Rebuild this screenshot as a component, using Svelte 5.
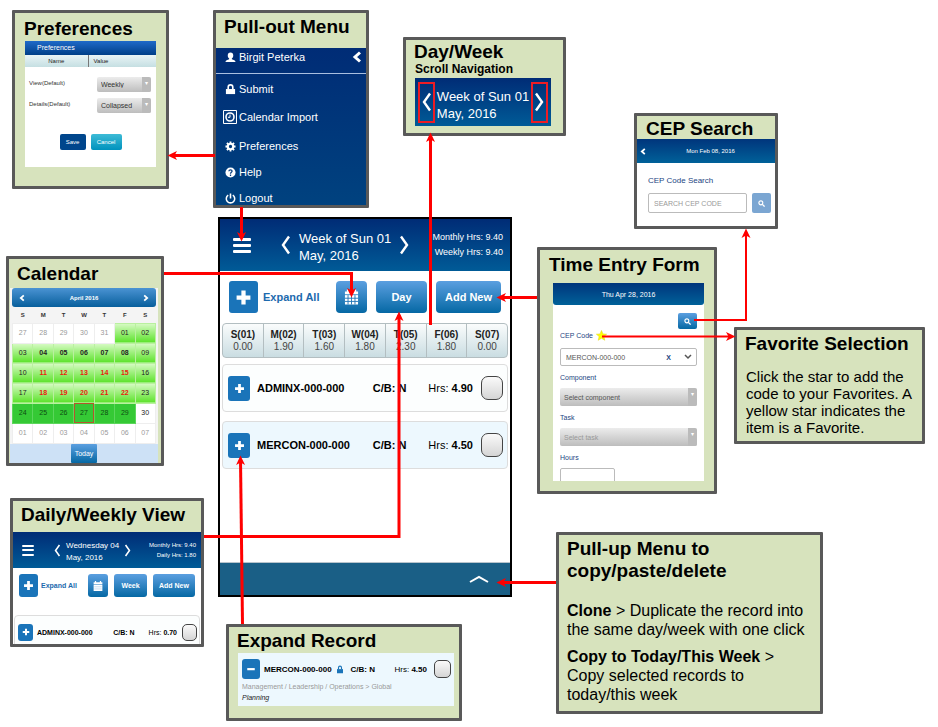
<script>
  const days = [
    ['S(01)', '0.00'], ['M(02)', '1.90'], ['T(03)', '1.60'], ['W(04)', '1.80'],
    ['T(05)', '2.30'], ['F(06)', '1.80'], ['S(07)', '0.00']
  ];
  const weekdays = ['S', 'M', 'T', 'W', 'T', 'F', 'S'];
  const out = (...n) => n.map((d) => ({ d, c: 'out' }));
  const weeks = [
    [...out('27', '28', '29', '30', '31'), { d: '01', c: 'open' }, { d: '02', c: 'open' }],
    ['03', '04', '05', '06', '07', '08', '09'].map((d, i) => ({ d, c: i > 0 && i < 6 ? 'open strong' : 'open' })),
    ['10', '11', '12', '13', '14', '15', '16'].map((d, i) => ({ d, c: i > 0 && i < 6 ? 'open due' : 'open' })),
    ['17', '18', '19', '20', '21', '22', '23'].map((d, i) => ({ d, c: i > 0 && i < 6 ? 'open due' : 'open' })),
    ['24', '25', '26', '27', '28', '29', '30'].map((d) => ({ d, c: d === '30' ? '' : d === '27' ? 'full today' : 'full' })),
    out('01', '02', '03', '04', '05', '06', '07')
  ];
  const arrows = [
    { d: 'M215 155.5H171', w: 3 },
    { d: 'M241.5 207V238', w: 3 },
    { d: 'M430.5 325V136', w: 3 },
    { d: 'M164 273.5H351.5V294', w: 3 },
    { d: 'M537 297.5H500', w: 3 },
    { d: 'M204 536.5H399V315', w: 3 },
    { d: 'M242.5 624L240.5 459', w: 3 },
    { d: 'M556 582.5H500', w: 3 },
    { d: 'M694 320H746V232', w: 2 },
    { d: 'M602 336.5H732', w: 2 }
  ];
</script>

{#snippet chevron(dir)}
  <svg class="chev" viewBox="0 0 10 20" aria-hidden="true">
    <path d={dir === 'left' ? 'M8 1.5L2 10L8 18.5' : 'M2 1.5L8 10L2 18.5'} fill="none" stroke="#fff" stroke-width="2.4" />
  </svg>
{/snippet}

{#snippet bold(dir)}
  <svg class="bold" viewBox="0 0 10 12" aria-hidden="true">
    <path d={dir === 'left' ? 'M8 1.5L3 6L8 10.500' : 'M2 1.5L7 6L2 10.500'} fill="none" stroke="#fff" stroke-width="3" />
  </svg>
{/snippet}

{#snippet plus()}
  <svg class="plus" viewBox="0 0 16 16" aria-hidden="true"><path d="M6 1.500h4V6h4.500v4H10v4.500H6V10H1.500V6H6z" fill="#fff" /></svg>
{/snippet}

{#snippet glass()}
  <svg class="glass" viewBox="0 0 16 16" aria-hidden="true">
    <circle cx="6.500" cy="6.500" r="4.500" fill="none" stroke="#fff" stroke-width="2.600" /><path d="M10 10l5 5" stroke="#fff" stroke-width="3" />
  </svg>
{/snippet}

{#snippet calendarIcon(grid)}
  <svg class="cal-icon" viewBox="0 0 16 18" aria-hidden="true">
    <path d="M1 3h2V1h2v2h6V1h2v2h2v3H1z" fill="#fff" />
    <path d="M1 7h14v10H1z" fill="#fff" />
    {#if grid}<path d="M4.300 7v10M8 7v10M11.700 7v10M1 10.300h14M1 13.700h14" stroke="#2577b8" stroke-width="1" />{:else}<path d="M2 10.300h12M2 13.700h12" stroke="#7fb0dc" stroke-width=".7" />{/if}
  </svg>
{/snippet}

{#snippet bar(line1, line2, hrs1, hrs2)}
  <header class="bar">
    <button class="plain burger" aria-label="Menu"><span></span><span></span><span></span></button>
    <button class="plain" aria-label="Previous">{@render chevron('left')}</button>
    <p class="when">{line1}<br />{line2}</p>
    <button class="plain" aria-label="Next">{@render chevron('right')}</button>
    <p class="hours">{hrs1}<br />{hrs2}</p>
  </header>
{/snippet}

{#snippet tools(mode, grid)}
  <div class="tools">
    <button class="flat" aria-label="Expand">{@render plus()}</button>
    <span class="expand">Expand All</span>
    <button class="blue cal" aria-label="Calendar">{@render calendarIcon(grid)}</button>
    <button class="blue mode">{mode}</button>
    <button class="blue add">Add New</button>
  </div>
{/snippet}

{#snippet record(code, hrs, tint)}
  <div class="record" class:tint>
    <button class="flat" aria-label="Expand {code}">{@render plus()}</button>
    <b class="code">{code}</b>
    <b class="cb">C/B: N</b>
    <span class="hrs">Hrs: <b>{hrs}</b></span>
    <input type="checkbox" aria-label="Select {code}" />
  </div>
{/snippet}

<main>
  <section class="card prefs">
    <h2>Preferences</h2>
    <div class="screen">
      <h3>Preferences</h3>
      <div class="heads"><span>Name</span><span>Value</span></div>
      <div class="field"><label for="view">View(Default)</label><span class="pick"><select id="view"><option>Weekly</option></select></span></div>
      <div class="field"><label for="details">Details(Default)</label><span class="pick"><select id="details"><option>Collapsed</option></select></span></div>
      <div class="actions"><button class="save">Save</button><button class="cancel">Cancel</button></div>
    </div>
  </section>

  <section class="card menu">
    <h2>Pull-out Menu</h2>
    <nav>
      <div class="user">
        <svg viewBox="0 0 12 12" aria-hidden="true"><path d="M6 .5c2 0 3 1.300 3 3.200 0 1.500-.6 2.600-1.500 3.200v1c1.800.5 4 1.200 4 3.100H.5c0-1.900 2.200-2.600 4-3.100v-1C3.600 6.300 3 5.200 3 3.700 3 1.800 4 .5 6 .5z" fill="#fff" /></svg>
        <span>Birgit Peterka</span>
        <button class="plain" aria-label="Close menu">{@render bold('left')}</button>
      </div>
      <div class="group">
        <a href="#submit"><svg viewBox="0 0 12 12" aria-hidden="true"><path d="M1 5.500h10V11H1z" fill="#fff" /><path d="M3.500 6V3.500a2.500 2.500 0 0 1 5 0V6" fill="none" stroke="#fff" stroke-width="1.800" /></svg>Submit</a>
        <a href="#import"><svg class="boxed" viewBox="0 0 14 14" aria-hidden="true"><path d="M.5.5h13v13H.5z" fill="#0a3f80" stroke="#fff" /><circle cx="7" cy="7" r="4" fill="none" stroke="#fff" stroke-width="1.600" /><path d="M7 4.500V7.300H5" fill="none" stroke="#fff" /></svg>Calendar Import</a>
      </div>
      <div class="group late">
        <a href="#preferences"><svg viewBox="0 0 12 12" aria-hidden="true"><circle cx="6" cy="6" r="3" fill="none" stroke="#fff" stroke-width="2.400" /><path d="M6 .5v2M6 9.500v2M.5 6h2M9.500 6h2M2.100 2.100l1.400 1.400M8.500 8.500l1.400 1.400M2.100 9.900l1.400-1.400M8.500 3.500l1.400-1.400" stroke="#fff" stroke-width="2" /></svg>Preferences</a>
        <a href="#help"><svg viewBox="0 0 12 12" aria-hidden="true"><circle cx="6" cy="6" r="5.500" fill="#fff" /><path d="M4.200 4.700C4.300 2.500 7.800 2.600 7.700 4.600 7.600 5.800 6 5.700 6 7.300M6 8.200v1.500" fill="none" stroke="#0a3f80" stroke-width="1.400" /></svg>Help</a>
        <a href="#logout"><svg viewBox="0 0 12 12" aria-hidden="true"><path d="M3.500 2.300a4.600 4.600 0 1 0 5 0M6 .5v5.500" fill="none" stroke="#fff" stroke-width="1.700" /></svg>Logout</a>
      </div>
    </nav>
  </section>

  <section class="card scroll">
    <h2>Day/Week</h2>
    <h4>Scroll Navigation</h4>
    <div class="screen">
      <button class="plain ring" aria-label="Previous week">{@render chevron('left')}</button>
      <p>Week of Sun 01<br />May, 2016</p>
      <button class="plain ring" aria-label="Next week">{@render chevron('right')}</button>
    </div>
  </section>

  <section class="card cep">
    <h2>CEP Search</h2>
    <div class="screen">
      <header><button class="plain" aria-label="Back">{@render bold('left')}</button><span>Mon Feb 08, 2016</span></header>
      <label for="cep">CEP Code Search</label>
      <div class="find"><input id="cep" type="text" placeholder="SEARCH CEP CODE" /><button aria-label="Search">{@render glass()}</button></div>
    </div>
  </section>

  <section class="card calendar">
    <h2>Calendar</h2>
    <div class="screen">
      <header><button class="plain" aria-label="Previous month">{@render bold('left')}</button><b>April 2016</b><button class="plain" aria-label="Next month">{@render bold('right')}</button></header>
      <table>
        <thead><tr>{#each weekdays as d}<th>{d}</th>{/each}</tr></thead>
        <tbody>
          {#each weeks as week}
            <tr>{#each week as day}<td class={day.c}>{day.d}</td>{/each}</tr>
          {/each}
        </tbody>
      </table>
      <footer><button class="blue">Today</button></footer>
    </div>
  </section>

  <section class="phone">
    {@render bar('Week of Sun 01', 'May, 2016', 'Monthly Hrs: 9.40', 'Weekly Hrs: 9.40')}
    {@render tools('Day', true)}
    <div class="week">
      {#each days as [name, total]}<div><b>{name}</b><span>{total}</span></div>{/each}
    </div>
    {@render record('ADMINX-000-000', '4.90', false)}
    {@render record('MERCON-000-000', '4.50', true)}
    <footer>
      <button class="plain" aria-label="Open menu"><svg viewBox="0 0 20 8" aria-hidden="true"><path d="M1 7L10 1.800L19 7" fill="none" stroke="#fff" stroke-width="2" /></svg></button>
    </footer>
  </section>

  <section class="card entry">
    <h2>Time Entry Form</h2>
    <div class="screen">
      <header>Thu Apr 28, 2016</header>
      <form>
        <button type="button" class="blue" aria-label="Search codes">{@render glass()}</button>
        <div class="starred">
          <label for="code">CEP Code</label>
          <svg viewBox="0 0 12 12" aria-hidden="true"><path d="M6 .5l1.600 3.800 4 .3-3 2.600 1 4L6 9l-3.600 2.200 1-4-3-2.600 4-.3z" fill="#ff0" stroke="#e3d820" stroke-width=".6" /></svg>
        </div>
        <div class="combo">
          <input id="code" type="text" value="MERCON-000-000" />
          <button type="button" class="plain">X</button>
          <svg viewBox="0 0 8 6" aria-hidden="true"><path d="M1 1l3 3 3-3" fill="none" stroke="#555" stroke-width="1.500" /></svg>
        </div>
        <label for="component">Component</label>
        <span class="pick"><select id="component"><option>Select component</option></select></span>
        <label for="task">Task</label>
        <span class="pick faded"><select id="task"><option>Select task</option></select></span>
        <label for="hours">Hours</label>
        <input class="amount" id="hours" type="text" />
      </form>
    </div>
  </section>

  <section class="card favorite">
    <h2>Favorite Selection</h2>
    <p>Click the star to add the<br />code to your Favorites. A<br />yellow star indicates the<br />item is a Favorite.</p>
  </section>

  <section class="card daily">
    <h2>Daily/Weekly View</h2>
    <div class="screen">
      {@render bar('Wednesday 04', 'May, 2016', 'Monthly Hrs: 9.40', 'Daily Hrs: 1.80')}
      {@render tools('Week', false)}
      {@render record('ADMINX-000-000', '0.70', false)}
    </div>
  </section>

  <section class="card expanded">
    <h2>Expand Record</h2>
    <div class="screen">
      <div class="line">
        <button class="flat" aria-label="Collapse"><svg viewBox="0 0 16 16" aria-hidden="true"><path d="M2 6.500h12v3.500H2z" fill="#fff" /></svg></button>
        <b class="code">MERCON-000-000</b>
        <svg class="lock" viewBox="0 0 10 12" aria-hidden="true"><path d="M1 5.500h8V11H1z" fill="#1a74b9" /><path d="M3 6V3.500a2 2 0 0 1 4 0V6" fill="none" stroke="#1a74b9" stroke-width="1.500" /></svg>
        <b>C/B: N</b>
        <span class="hrs">Hrs: <b>4.50</b></span>
        <input type="checkbox" aria-label="Select MERCON-000-000" />
      </div>
      <p>Management / Leadership / Operations &gt; Global</p>
      <p><em>Planning</em></p>
    </div>
  </section>

  <section class="card pullup">
    <h2>Pull-up Menu to<br />copy/paste/delete</h2>
    <p><b>Clone</b> &gt; Duplicate the record into the same day/week with one click</p>
    <p><b>Copy to Today/This Week</b> &gt;<br />Copy selected records to<br />today/this week</p>
  </section>

  <svg class="arrows" aria-hidden="true">
    <defs>
      <marker id="head" markerUnits="userSpaceOnUse" markerWidth="10" markerHeight="10" refX="6" refY="5" orient="auto" viewBox="0 0 10 10">
        <path d="M0 .5L9.500 5L0 9.500L2.500 5z" fill="#f00" />
      </marker>
    </defs>
    {#each arrows as a}<path d={a.d} fill="none" stroke="#f00" stroke-width={a.w} marker-end="url(#head)" />{/each}
  </svg>
</main>

<style>
  :global(body) { margin: 0; background: #fff; }
  main { position: relative; min-height: 100vh; font-family: "Liberation Sans", Arial, sans-serif; color: #000; overflow: hidden; }
  main * { box-sizing: border-box; }
  h2, h3, h4, p { margin: 0; }
  button, input, select { font: inherit; color: inherit; padding: 0; margin: 0; border: 0; }
  button { display: flex; align-items: center; justify-content: center; flex: none; }
  svg { display: block; flex: none; }
  .plain { background: none; }
  .arrows { position: absolute; inset: 0; width: 100%; height: 100%; pointer-events: none; }

  .card { position: absolute; display: flex; flex-direction: column; background: #d7e3bd; border: 3px solid #595959; border-radius: 1px; padding-top: 3px; }
  h2 { font-size: 19px; line-height: 22px; padding-left: 8px; white-space: nowrap; }
  .screen { background: #fff; }
  .blue { background: linear-gradient(#5b9fe0, #0568a4); color: #fff; font-weight: bold; border-radius: 4px; }
  .flat { background: #1a74b9; border-radius: 3px; }
  input[type="checkbox"] { appearance: none; flex: none; border: 1px solid #444; background: linear-gradient(#fafafa, #d5d5d5); }

  .pick { display: flex; border-radius: 2px; overflow: hidden; background: linear-gradient(#ececec, #bdbdbd); position: relative; }
  .pick::after { content: "▾"; width: 9px; background: #bbb; color: #fff; font-size: 6px; line-height: 12px; text-align: center; }
  .pick select { appearance: none; flex: 1; min-width: 0; background: none; padding-left: 4px; }

  .prefs { left: 12px; top: 10px; width: 157px; min-height: 179px; padding-top: 5px; }
  .prefs h2 { padding-left: 9px; }
  .prefs .screen { margin: 1px 10px 0; height: 126px; font-size: 7px; color: #333; }
  .prefs h3 { font-size: 7px; font-weight: normal; line-height: 14px; color: #fff; padding-left: 12px; background: linear-gradient(#1f6ac9, #003f88); }
  .heads { display: flex; line-height: 12px; font-size: 6px; color: #222; background: linear-gradient(#e9f4f6, #c5dfe2); margin-bottom: 10px; }
  .heads span { flex: 1; text-align: center; }
  .heads span + span { text-align: left; border-left: 1px solid #777; padding-left: 5px; }
  .field { display: flex; align-items: center; justify-content: space-between; padding: 0 5px 0 4px; height: 15px; margin-bottom: 6px; font-size: 6px; }
  .field .pick { width: 54px; height: 15px; font-size: 7px; }
  .field label { line-height: 10px; padding-bottom: 4px; }
  .actions { display: flex; justify-content: center; gap: 5px; padding-top: 15px; font-size: 6px; color: #fff; }
  .actions button { height: 16px; border-radius: 2px; }
  .save { width: 26px; background: #00468c; }
  .cancel { width: 31px; background: linear-gradient(#3dbbd6, #0092bd); }

  .menu { left: 213px; top: 10px; width: 156px; min-height: 197px; }
  nav { flex: 1; margin-top: 10px; background: linear-gradient(#002c76, #00427f); color: #fff; font-size: 11px; line-height: 14px; }
  nav svg { width: 11px; height: 11px; }
  nav svg.boxed { width: 14px; height: 14px; margin: 0 -1px 0 -2px; }
  .user { display: flex; align-items: center; gap: 3px; height: 26px; padding: 0 4px 7px 9px; border-bottom: 1px solid #a9bfe0; }
  .user button { margin-left: auto; }
  .user .bold { width: 10px; height: 12px; }
  .group { display: flex; flex-direction: column; gap: 14px; padding: 8px 0 0 9px; }
  .late { gap: 12px; padding-top: 15px; }
  .group a { display: flex; align-items: center; gap: 3px; color: #fff; text-decoration: none; }

  .scroll { left: 403px; top: 37px; width: 163px; min-height: 99px; padding-top: 1px; }
  h4 { font-size: 12px; line-height: 13px; padding-left: 9px; }
  .scroll .screen { display: flex; align-items: center; justify-content: space-between; margin: 2px 12px 0 9px; padding: 0 3px; height: 48px; color: #fff; font-size: 13px; line-height: 17px; white-space: nowrap; background: linear-gradient(#002c76, #005b97); }
  .scroll p { padding-top: 6px; }
  .ring { width: 17px; height: 41px; border: 2px solid #ed1c24; }
  .chev { width: 10px; height: 20px; }

  .cep { left: 634px; top: 113px; width: 144px; min-height: 116px; padding-top: 2px; }
  .cep h2 { padding-left: 9px; line-height: 21px; }
  .cep .screen { flex: 1; color: #23457f; }
  .cep header { display: flex; align-items: center; height: 24px; padding-left: 3px; background: linear-gradient(#00357c, #006199); color: #fff; font-size: 6px; }
  .cep header span { flex: 1; text-align: center; }
  .cep .bold { width: 6px; height: 9px; }
  .cep label { display: block; font-size: 8px; line-height: 10px; padding: 13px 0 7px 11px; }
  .find { display: flex; gap: 5px; padding: 0 4px 0 11px; }
  .find input { flex: 1; min-width: 0; height: 20px; border: 1px solid #bbb; border-radius: 2px; padding-left: 5px; font-size: 7px; }
  .find input::placeholder { color: #999; opacity: 1; }
  .find button { width: 19px; height: 20px; background: #7ba6d2; border-radius: 2px; }
  .glass { width: 7px; height: 7px; }

  .calendar { left: 6px; top: 256px; width: 158px; min-height: 210px; padding-top: 4px; }
  .calendar .screen { margin: 3px 3px 0 1px; padding: 0 2px; background: #f4f4f4; font-size: 7px; }
  .calendar header { display: flex; align-items: center; justify-content: space-between; height: 19px; padding: 0 7px; border-radius: 3px; background: linear-gradient(#4a93d3, #085f9c); color: #fff; }
  .calendar header b { font-size: 6px; }
  .calendar .bold { width: 6px; height: 8px; }
  table { width: 100%; border-collapse: collapse; table-layout: fixed; }
  th { height: 16px; padding: 0; font-size: 6px; color: #333; }
  td { height: 20px; padding: 0; border: 1px solid #eee; background: #fff; text-align: center; color: #222; font-size: 7px; line-height: 8px; }
  td.out { color: #999; }
  td.open { background: linear-gradient(#d8fbc5, #5ce22b); border-color: #b9f09f; }
  td.strong { font-weight: bold; }
  td.due { font-weight: bold; color: #e81c0c; }
  td.full { background: #35c935; border-color: #5bd65b; color: #0d4d12; }
  td.today { outline: 1px solid #b5562c; outline-offset: -1px; }
  .calendar footer { display: flex; justify-content: center; margin: 0 -2px; background: #cde1f6; }
  .calendar footer button { width: 26px; height: 19px; font-size: 7px; font-weight: normal; border-radius: 1px; }

  .phone { position: absolute; left: 218px; top: 217px; width: 294px; min-height: 380px; border: 2px solid #000; background: #fff; display: flex; flex-direction: column; }
  .bar { display: flex; align-items: center; color: #fff; background: linear-gradient(#002c76, #005b97); white-space: nowrap; }
  .bar .hours { margin-left: auto; text-align: right; }
  .burger { flex-direction: column; justify-content: space-between; }
  .burger span { width: 100%; background: #fff; border-radius: 1px; }
  .phone .bar { height: 52px; padding: 0 7px 0 13px; }
  .phone .burger { width: 18px; height: 15px; margin-right: 30px; }
  .phone .burger span { height: 3px; }
  .phone .when { font-size: 13px; line-height: 17px; margin: 4px 8px 0; }
  .phone .hours { font-size: 9px; line-height: 15px; }
  .tools { display: flex; align-items: center; color: #1d6aae; }
  .tools .expand { font-weight: bold; flex: 1; white-space: nowrap; }
  .phone .tools { padding: 10px 9px; gap: 9px; font-size: 11px; }
  .phone .tools button { height: 32px; }
  .phone .tools .flat { width: 29px; margin-right: -4px; }
  .phone .plus { width: 17px; height: 17px; }
  .phone .cal { width: 31px; }
  .phone .cal-icon { width: 15px; height: 18px; }
  .phone .mode { width: 51px; }
  .phone .add { width: 65px; }
  .week { display: flex; margin: 0 2px; height: 35px; border: 1px solid #b3bec1; border-radius: 4px; background: linear-gradient(#fafcfc, #cadde2); overflow: hidden; font-size: 10px; line-height: 12px; color: #444; }
  .week div { flex: 1; display: flex; flex-direction: column; align-items: center; justify-content: center; }
  .week div + div { border-left: 1px solid #b3bec1; }
  .week b { color: #222; }
  .record { display: flex; align-items: center; border: 1px solid #ddd; border-radius: 4px; background: #fcfefe; white-space: nowrap; }
  .record.tint { background: #edf8fe; }
  .record .code { flex: 1; }
  .phone .record { height: 48px; margin: 6px 2px 0; padding: 0 4px 0 5px; font-size: 11px; }
  .phone .record + .record { margin-top: 9px; }
  .phone .record .flat { width: 22px; height: 25px; margin-right: 7px; }
  .phone .record .plus { width: 11px; height: 11px; }
  .phone .record .cb { margin-right: 22px; }
  .phone .record .hrs { margin-right: 8px; }
  .phone input { width: 22px; height: 24px; border-radius: 7px; }
  .phone footer { display: flex; justify-content: flex-end; align-items: center; margin-top: auto; height: 33px; padding-right: 21px; background: #1a5f86; border-top: 1px solid #b8c4cc; }
  .phone footer svg { width: 20px; height: 8px; }

  .entry { left: 537px; top: 247px; width: 180px; min-height: 247px; padding-top: 4px; }
  .entry h2 { padding-left: 9px; }
  .entry .screen { margin: 7px 10px 0 13px; height: 198px; overflow: hidden; font-size: 7px; }
  .entry header { height: 22px; line-height: 24px; text-align: center; color: #fff; background: linear-gradient(#00357c, #006199); border-radius: 0 0 3px 3px; }
  form { display: flex; flex-direction: column; padding: 8px 7px 0; color: #555; }
  form .blue { align-self: flex-end; width: 19px; height: 16px; border-radius: 2px; }
  form label { color: #23457f; line-height: 10px; margin: 7px 0 5px; }
  .starred { display: flex; align-items: center; gap: 3px; height: 12px; margin-bottom: 7px; }
  .starred svg { width: 11px; height: 11px; }
  .combo { display: flex; align-items: center; height: 18px; border: 1px solid #bbb; border-radius: 2px; padding: 0 4px 0 5px; }
  .combo input { flex: 1; min-width: 0; background: none; }
  .combo button { font-weight: bold; color: #23457f; margin-right: 13px; }
  .combo svg { width: 8px; height: 6px; }
  form .pick { height: 18px; }
  .faded { color: #999; }
  .amount { width: 55px; height: 18px; border: 1px solid #bbb; border-radius: 2px; }

  .favorite { left: 734px; top: 327px; width: 191px; min-height: 117px; }
  .favorite p { font-size: 15px; line-height: 17px; padding: 13px 0 0 9px; white-space: nowrap; }

  .daily { left: 10px; top: 498px; width: 194px; min-height: 149px; }
  .daily .screen { margin-top: 6px; height: 112px; overflow: hidden; }
  .daily .bar { height: 36px; padding: 0 5px 0 9px; }
  .daily .burger { width: 12px; height: 11px; margin-right: 20px; }
  .daily .burger span { height: 2px; }
  .daily .chev { width: 7px; height: 13px; }
  .daily .when { font-size: 8px; line-height: 12px; margin: 3px 5px 0; }
  .daily .hours { font-size: 6px; line-height: 10px; }
  .daily .tools { padding: 6px 6px 18px; gap: 6px; font-size: 7px; }
  .daily .tools button { height: 23px; border-radius: 3px; }
  .daily .tools .flat { width: 19px; margin-right: -3px; }
  .daily .plus { width: 11px; height: 11px; }
  .daily .cal { width: 20px; }
  .daily .cal-icon { width: 10px; height: 12px; }
  .daily .mode { width: 33px; }
  .daily .add { width: 42px; }
  .daily .record { height: 34px; margin: 0 1px; padding: 0 2px 0 3px; font-size: 7px; }
  .daily .record .flat { width: 15px; height: 17px; margin-right: 4px; }
  .daily .record .plus { width: 8px; height: 8px; }
  .daily .record .cb { margin-right: 14px; }
  .daily .record .hrs { margin-right: 5px; }
  .daily input { width: 15px; height: 17px; border-radius: 5px; }

  .expanded { left: 226px; top: 624px; width: 236px; min-height: 97px; }
  .expanded .screen { margin: 1px 5px 0 9px; padding: 6px 3px 0 4px; height: 53px; background: #edf8fe; }
  .line { display: flex; align-items: center; font-size: 8px; white-space: nowrap; margin-bottom: 2px; }
  .line .flat { width: 18px; height: 20px; margin-right: 4px; }
  .line .flat svg { width: 10px; height: 10px; }
  .line .lock { width: 8px; height: 9px; margin: 0 7px 0 4px; }
  .line .hrs { margin: 0 7px 0 auto; }
  .line input { width: 17px; height: 18px; border-radius: 5px; }
  .expanded p { font-size: 7px; line-height: 11px; color: #999; white-space: nowrap; }
  .expanded em { color: #222; }

  .pullup { left: 556px; top: 532px; width: 267px; min-height: 182px; }
  .pullup p { font-size: 16px; line-height: 19px; padding: 0 8px; margin-top: 8px; }
  .pullup h2 + p { margin-top: 19px; }
</style>
